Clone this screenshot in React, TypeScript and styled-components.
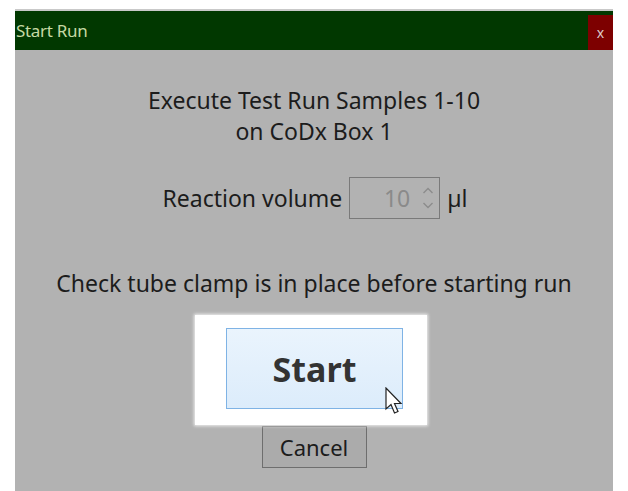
import styled, { createGlobalStyle } from "styled-components";

const GlobalStyle = createGlobalStyle`
  html, body {
    margin: 0;
    padding: 0;
    background: #ffffff;
    height: 100%;
    overflow: hidden;
  }
  body {
    font-family: "Noto Sans", "Open Sans", sans-serif;
  }
`;

function App() {
  return (
    <>
      <GlobalStyle />
      <Page>
        <Dialog>
          <TitleBar>
            <Title>Start Run</Title>
            <CloseButton>x</CloseButton>
          </TitleBar>
          <Body>
            <Heading>
              Execute Test Run Samples 1-10
              <br />
              on CoDx Box 1
            </Heading>
            <VolumeRow>
              <Label>Reaction volume</Label>
              <NumberBox>
                <span>10</span>
                <Spinner>
                  <svg width="12" height="26" viewBox="0 0 12 26">
                    <path d="M1.5 8 L6 3.5 L10.5 8" fill="none" stroke="#8c8c8c" strokeWidth="1.4" />
                    <path d="M1.5 18 L6 22.5 L10.5 18" fill="none" stroke="#8c8c8c" strokeWidth="1.4" />
                  </svg>
                </Spinner>
              </NumberBox>
              <Label>µl</Label>
            </VolumeRow>
            <Notice>Check tube clamp is in place before starting run</Notice>
            <Highlight>
              <StartButton>Start</StartButton>
              <Cursor>
                <svg width="19" height="29" viewBox="0 0 19 29">
                  <path
                    d="M1 1 L1 22 L6 17.5 L9.5 26 L13 24.5 L9.5 16.5 L16 16.5 Z"
                    fill="#ffffff"
                    stroke="#222222"
                    strokeWidth="1.2"
                    strokeLinejoin="miter"
                  />
                </svg>
              </Cursor>
            </Highlight>
            <CancelButton>Cancel</CancelButton>
          </Body>
        </Dialog>
      </Page>
    </>
  );
}

export default App;

const Page = styled.div`
  height: 491px;
  padding: 9px 15px 0 15px;
  box-sizing: border-box;
`;

const Dialog = styled.div`
  width: 598px;
  height: 482px;
  display: flex;
  flex-direction: column;
  border-top: 2px solid #c9c9c9;
  box-sizing: border-box;
`;

const TitleBar = styled.div`
  height: 39px;
  flex: none;
  background: #013800;
  display: flex;
  align-items: stretch;
  justify-content: space-between;
`;

const Title = styled.span`
  color: #c6d9a4;
  font-size: 17px;
  padding-left: 1px;
  line-height: 39px;
  letter-spacing: -0.3px;
`;

const CloseButton = styled.div`
  width: 25px;
  margin-top: 4px;
  background: #7d0000;
  color: #dccaca;
  font-size: 14px;
  display: flex;
  align-items: center;
  justify-content: center;
`;

const Body = styled.div`
  flex: 1;
  background: #b2b2b2;
  display: flex;
  flex-direction: column;
  align-items: center;
  padding-top: 35px;
  color: #1c1c1c;
`;

const Heading = styled.div`
  font-size: 23px;
  line-height: 31px;
  text-align: center;
`;

const VolumeRow = styled.div`
  margin-top: 30px;
  display: flex;
  align-items: center;
  gap: 7px;
  margin-left: 2px;
`;

const Label = styled.span`
  font-size: 23px;
  line-height: 31px;
`;

const NumberBox = styled.div`
  width: 91px;
  height: 42px;
  border: 1px solid #7a7a7a;
  box-sizing: border-box;
  display: flex;
  align-items: center;
  justify-content: flex-end;
  gap: 12px;
  padding-right: 5px;
  color: #8a8a8a;
  font-size: 23px;
`;

const Spinner = styled.div`
  display: flex;
  align-items: center;
`;

const Notice = styled.div`
  margin-top: 50px;
  font-size: 23px;
  line-height: 28px;
`;

const Highlight = styled.div`
  position: relative;
  margin-top: 18px;
  margin-right: 6px;
  width: 232px;
  height: 110px;
  box-sizing: border-box;
  padding: 13px 24px 16px 31px;
  background: #ffffff;
  box-shadow: 0 0 3px 1px rgba(255, 255, 255, 0.8);
`;

const StartButton = styled.div`
  width: 177px;
  height: 81px;
  box-sizing: border-box;
  border: 1px solid #7fb3e5;
  background: linear-gradient(#eaf4fd, #dcecfb);
  display: flex;
  align-items: center;
  justify-content: center;
  font-size: 34px;
  font-weight: bold;
  color: #333333;
`;

const Cursor = styled.div`
  position: absolute;
  left: 190px;
  top: 72px;
  line-height: 0;
`;

const CancelButton = styled.div`
  margin-top: 1px;
  width: 105px;
  height: 42px;
  box-sizing: border-box;
  border: 1px solid #6e6e6e;
  background: #ababab;
  display: flex;
  align-items: center;
  justify-content: center;
  font-size: 22px;
  color: #1c1c1c;
`;
